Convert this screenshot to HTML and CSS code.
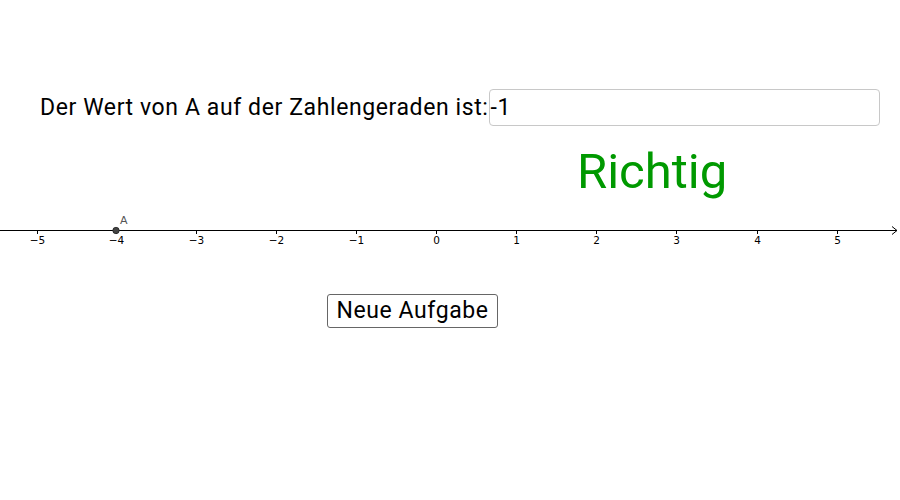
FILE: index.html
```html
<!DOCTYPE html>
<html>
<head>
<meta charset="utf-8">
<link rel="stylesheet" href="styles.css">
</head>
<body>
<div class="applet">
  <div class="question">
    <span class="label">Der Wert von A auf der Zahlengeraden ist:</span>
    <div class="answer">-1</div>
  </div>
  <div class="result">Richtig</div>
  <svg class="axis" width="900" height="64" viewBox="0 196 900 64">
    <line x1="0" y1="230.5" x2="897" y2="230.5" stroke="#000" stroke-width="1"/>
    <polyline points="892,226.5 897,230.5 892,234.5" fill="none" stroke="#000" stroke-width="1"/>
    <g stroke="#000" stroke-width="1">
      <line x1="37.5" y1="230" x2="37.5" y2="234"/>
      <line x1="116.5" y1="230" x2="116.5" y2="234"/>
      <line x1="196.5" y1="230" x2="196.5" y2="234"/>
      <line x1="276.5" y1="230" x2="276.5" y2="234"/>
      <line x1="356.5" y1="230" x2="356.5" y2="234"/>
      <line x1="436.5" y1="230" x2="436.5" y2="234"/>
      <line x1="516.5" y1="230" x2="516.5" y2="234"/>
      <line x1="596.5" y1="230" x2="596.5" y2="234"/>
      <line x1="676.5" y1="230" x2="676.5" y2="234"/>
      <line x1="757.5" y1="230" x2="757.5" y2="234"/>
      <line x1="837.5" y1="230" x2="837.5" y2="234"/>
    </g>
    <g class="ticklabel" text-anchor="middle">
      <text x="37.5" y="244">−5</text>
      <text x="116.5" y="244">−4</text>
      <text x="196.5" y="244">−3</text>
      <text x="276.5" y="244">−2</text>
      <text x="356.5" y="244">−1</text>
      <text x="436.5" y="244">0</text>
      <text x="516.5" y="244">1</text>
      <text x="596.5" y="244">2</text>
      <text x="676.5" y="244">3</text>
      <text x="757.5" y="244">4</text>
      <text x="837.5" y="244">5</text>
    </g>
    <circle cx="116" cy="230.5" r="3.2" fill="#444" stroke="#222" stroke-width="0.8"/>
    <text class="pointlabel" x="120" y="224">A</text>
  </svg>
  <div class="actions">
    <button class="btn">Neue Aufgabe</button>
  </div>
</div>
</body>
</html>
```
FILE: styles.css
```css
html, body {
  margin: 0;
  padding: 0;
  background: #fff;
}
.applet {
  box-sizing: border-box;
  width: 900px;
  height: 500px;
  padding-top: 89px;
  overflow: hidden;
  font-family: Roboto, "Liberation Sans", sans-serif;
  color: #000;
}
.question {
  display: flex;
  align-items: center;
  padding-left: 40px;
  height: 37px;
}
.label {
  font-size: 23px;
  letter-spacing: 0.6px;
  line-height: 37px;
}
.answer {
  box-sizing: border-box;
  width: 391px;
  height: 37px;
  margin-left: 0;
  border: 1px solid #c8c8c8;
  border-radius: 4px;
  padding-left: 1px;
  font-size: 23px;
  letter-spacing: 0.6px;
  line-height: 35px;
}
.result {
  margin-top: 21px;
  padding-left: 577px;
  font-size: 49px;
  line-height: 49px;
  color: #009900;
}
.axis {
  display: block;
}
.ticklabel {
  font-family: "DejaVu Sans", sans-serif;
  font-size: 10.5px;
  fill: #000;
}
.pointlabel {
  font-family: "DejaVu Sans", sans-serif;
  font-size: 11px;
  fill: #555;
}
.actions {
  margin-top: 34px;
  padding-left: 327px;
}
.btn {
  box-sizing: border-box;
  width: 171px;
  height: 34px;
  padding: 0;
  background: #fff;
  border: 1px solid #666;
  border-radius: 3px;
  font-family: Roboto, "Liberation Sans", sans-serif;
  font-size: 23px;
  letter-spacing: 0.6px;
  line-height: 32px;
  color: #000;
}
```
